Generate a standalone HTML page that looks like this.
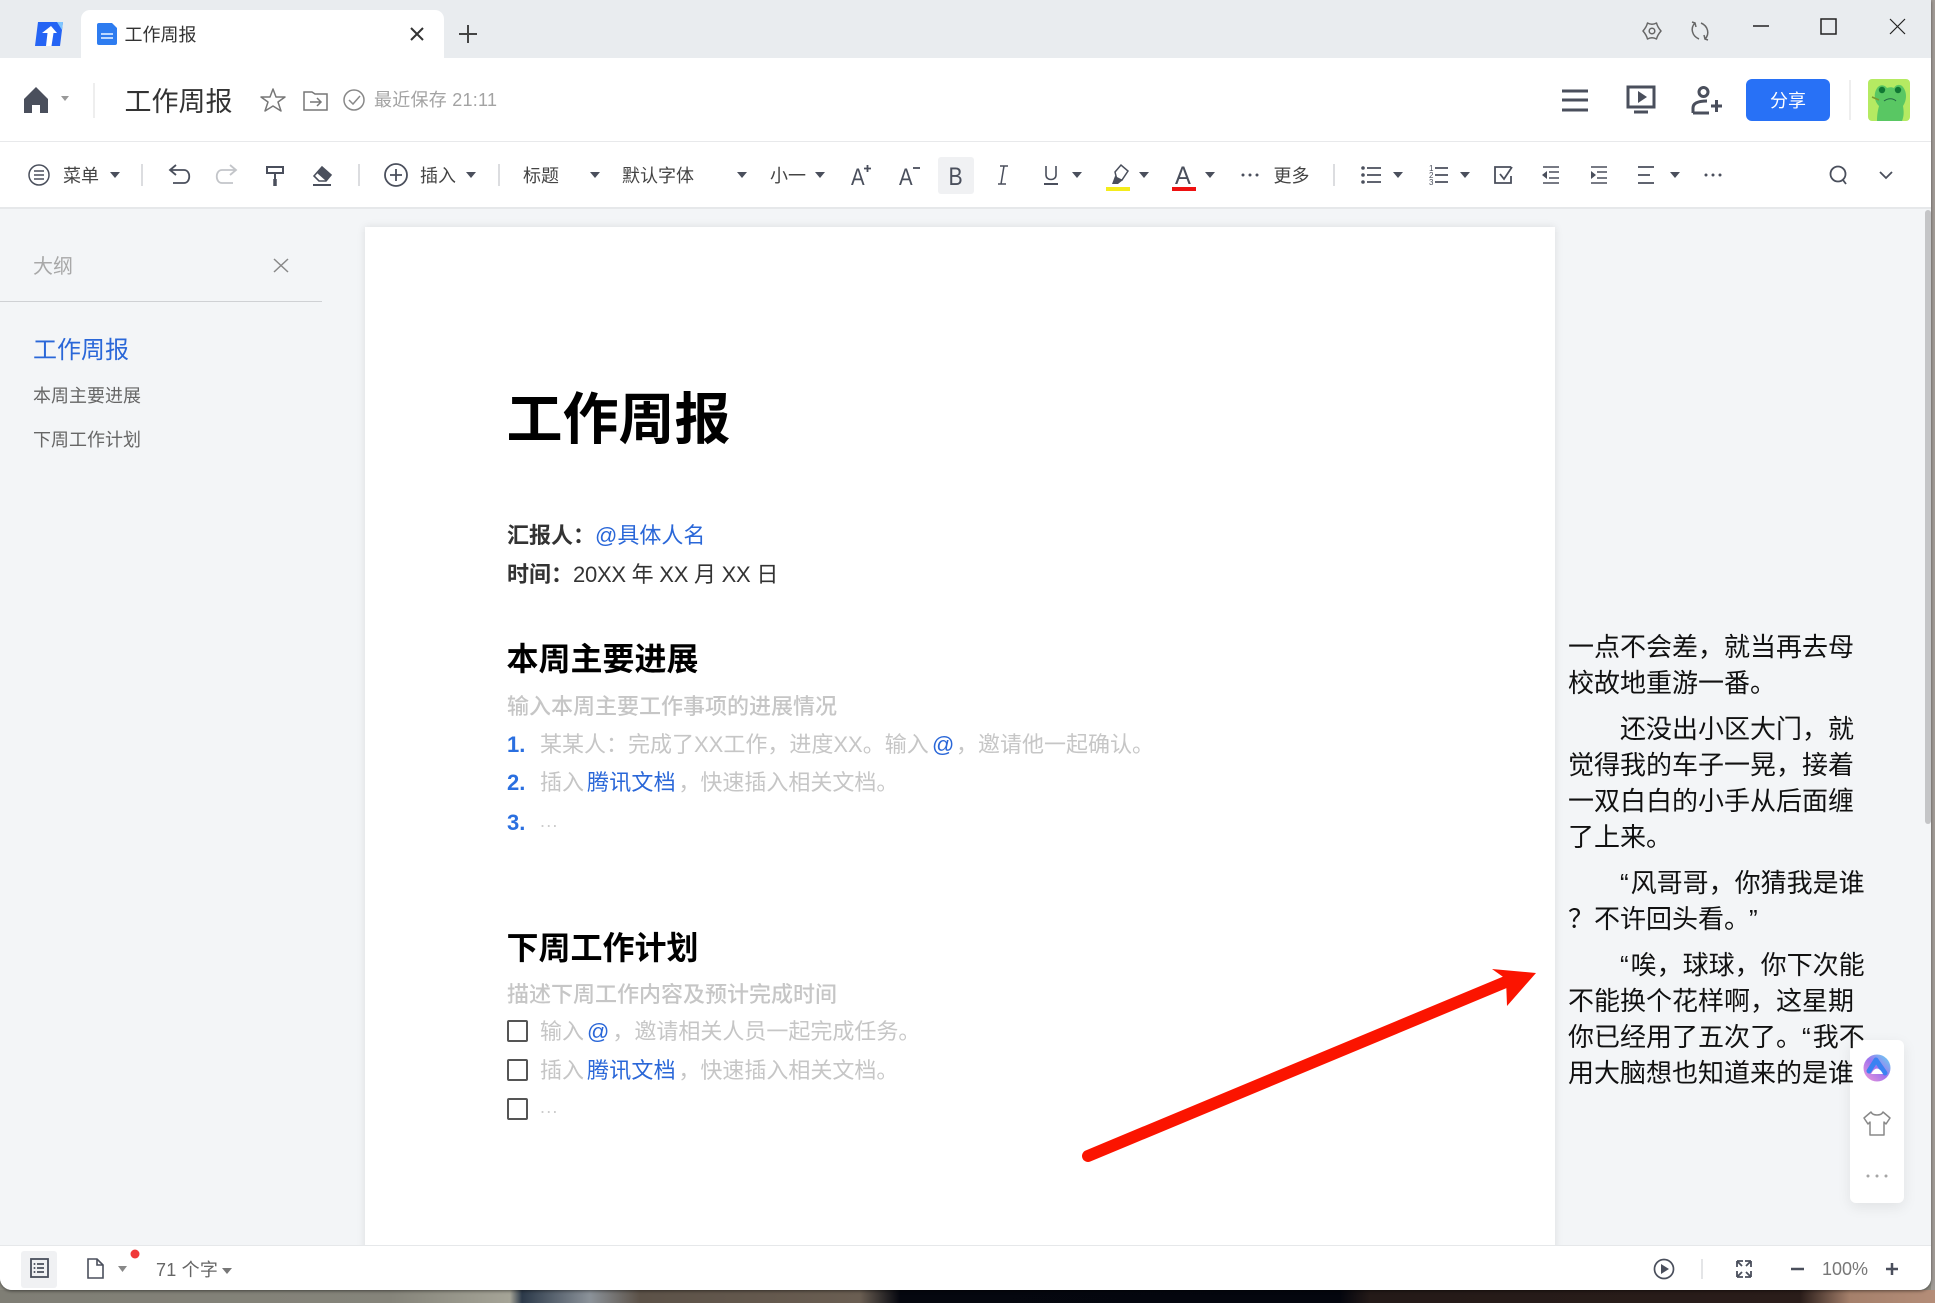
<!DOCTYPE html>
<html lang="zh">
<head>
<meta charset="utf-8">
<title>工作周报</title>
<style>
html,body{margin:0;padding:0;width:1935px;height:1303px;overflow:hidden;background:#8c8b82;}
body{position:relative;font-family:"Liberation Sans","Noto Sans CJK SC",sans-serif;}
.a{position:absolute;}
.t{position:absolute;white-space:nowrap;line-height:1;}
.tb{font-size:18px;color:#444;}
.p{font-size:22px;color:#c6c6c6;}
.b{color:#2a67d8;}
.n{font-size:26px;color:#111;}
.q{margin-right:2px;}
svg.ov{position:absolute;left:0;top:0;}
</style>
</head>
<body>
<!-- desktop photo strip -->
<div class="a" style="left:0;top:1290px;width:1935px;height:13px;background:linear-gradient(90deg,#7f7e75 0,#85847a 390px,#a5a497 510px,#2c3a4a 522px,#8b9299 590px,#5c5248 640px,#6a5e52 860px,#05070f 900px,#04060e 1340px,#241a18 1370px,#2a1d1a 1800px,#a5806b 1850px,#b48d78 1935px);"></div>
<div class="a" style="left:1931px;top:0;width:4px;height:1290px;background:#a19b96;"></div>
<!-- window -->
<div class="a" style="left:0;top:0;width:1931px;height:1290px;background:#f3f5f7;border-radius:0 0 12px 12px;overflow:hidden;box-shadow:0 1px 3px rgba(0,0,0,.5);">
  <div class="a" style="left:0;top:0;width:1931px;height:58px;background:#e9ecef;"></div>
  <div class="a" style="left:81px;top:10px;width:363px;height:48px;background:#fff;border-radius:9px 9px 0 0;"></div>
  <div class="a" style="left:0;top:58px;width:1931px;height:83px;background:#fff;"></div>
  <div class="a" style="left:0;top:141px;width:1931px;height:68px;background:#fff;border-top:1px solid #e8e9eb;border-bottom:2px solid #e6e8ea;box-sizing:border-box;"></div>
  <div class="a" style="left:938px;top:157px;width:36px;height:37px;background:#f0f1f3;border-radius:3px;"></div>
  <div class="a" style="left:1746px;top:79px;width:84px;height:42px;background:#2871f6;border-radius:6px;"></div>
  <div class="a" style="left:0;top:301px;width:322px;height:1px;background:#cfd1d4;"></div>
  <!-- doc page -->
  <div class="a" style="left:365px;top:227px;width:1190px;height:1030px;background:#fff;box-shadow:0 0 8px rgba(0,0,0,.10);"></div>
  <!-- scrollbar -->
  <div class="a" style="left:1925px;top:210px;width:6px;height:614px;background:#c4c5c7;border-radius:3px;"></div>
  <!-- status bar -->
  <div class="a" style="left:0;top:1245px;width:1931px;height:45px;background:#fff;border-top:1px solid #e6e8ea;box-sizing:border-box;"></div>
  <div class="a" style="left:21px;top:1251px;width:36px;height:37px;background:#f0f1f3;border-radius:3px;"></div>
  <!-- float card -->
  <div class="a" style="left:1850px;top:1040px;width:54px;height:163px;background:#fff;border-radius:6px;box-shadow:0 4px 14px rgba(0,0,0,.08);"></div>
</div>

<!-- tab / header text -->
<span class="t" style="left:124.500px;top:26px;font-size:18px;color:#333;">工作周报</span>
<span class="t" style="left:124.500px;top:89px;font-size:27px;color:#333;">工作周报</span>
<span class="t" style="left:374px;top:91px;font-size:18px;color:#a3a3a3;letter-spacing:.25px;">最近保存 21:11</span>
<span class="t" style="left:1770px;top:92px;font-size:18px;color:#fff;">分享</span>

<!-- toolbar text -->
<span class="t tb" style="left:63px;top:167px;">菜单</span>
<span class="t tb" style="left:420px;top:167px;">插入</span>
<span class="t tb" style="left:523px;top:167px;">标题</span>
<span class="t tb" style="left:622px;top:167px;">默认字体</span>
<span class="t tb" style="left:770px;top:167px;">小一</span>
<span class="t tb" style="left:1273.500px;top:167px;">更多</span>

<!-- outline -->
<span class="t" style="left:33px;top:257px;font-size:20px;color:#a8a8a8;">大纲</span>
<span class="t" style="left:33px;top:339px;font-size:24px;color:#2a67d8;">工作周报</span>
<span class="t" style="left:33px;top:387px;font-size:18px;color:#666;">本周主要进展</span>
<span class="t" style="left:33px;top:431px;font-size:18px;color:#666;">下周工作计划</span>

<!-- document -->
<span class="t" style="left:506.500px;top:392px;font-size:56px;font-weight:700;color:#000;">工作周报</span>
<span class="t" style="left:507px;top:525px;font-size:22px;font-weight:700;color:#333;">汇报人：</span>
<span class="t b" style="left:595px;top:525px;font-size:22px;">@具体人名</span>
<span class="t" style="left:507px;top:564px;font-size:22px;font-weight:700;color:#333;">时间：</span>
<span class="t" style="left:573px;top:564px;font-size:22px;color:#333;letter-spacing:-.25px;">20XX 年 XX 月 XX 日</span>

<span class="t" style="left:506.500px;top:643px;font-size:32px;font-weight:700;color:#000;">本周主要进展</span>
<span class="t p" style="left:507px;top:696px;font-weight:500;">输入本周主要工作事项的进展情况</span>
<span class="t" style="left:507px;top:734px;font-size:22px;font-weight:700;color:#2a6fe0;">1.</span>
<span class="t p" style="left:540px;top:734px;">某某人：完成了XX工作，进度XX。输入</span>
<span class="t b" style="left:932px;top:734px;font-size:22px;">@</span>
<span class="t p" style="left:956px;top:734px;">，邀请他一起确认。</span>
<span class="t" style="left:507px;top:772px;font-size:22px;font-weight:700;color:#2a6fe0;">2.</span>
<span class="t p" style="left:540px;top:772px;">插入<span class="b" style="margin:0 2.500px 0 3px;letter-spacing:.2px;">腾讯文档</span>，快速插入相关文档。</span>
<span class="t" style="left:507px;top:812px;font-size:22px;font-weight:700;color:#2a6fe0;">3.</span>
<span class="t" style="left:540px;top:812px;font-size:18px;color:#ccc;letter-spacing:1.200px;">...</span>

<span class="t" style="left:506.500px;top:932px;font-size:32px;font-weight:700;color:#000;">下周工作计划</span>
<span class="t p" style="left:507px;top:984px;font-weight:500;">描述下周工作内容及预计完成时间</span>
<span class="t p" style="left:540px;top:1021px;">输入<span class="b" style="margin:0 3px 0 3px;">@</span>，邀请相关人员一起完成任务。</span>
<span class="t p" style="left:540px;top:1060px;">插入<span class="b" style="margin:0 2.500px 0 3px;letter-spacing:.2px;">腾讯文档</span>，快速插入相关文档。</span>
<span class="t" style="left:540px;top:1098px;font-size:18px;color:#ccc;letter-spacing:1.200px;">...</span>
<div class="a" style="left:507px;top:1020px;width:17px;height:18px;border:2px solid #555;border-radius:2px;"></div>
<div class="a" style="left:507px;top:1059px;width:17px;height:18px;border:2px solid #555;border-radius:2px;"></div>
<div class="a" style="left:507px;top:1098px;width:17px;height:18px;border:2px solid #555;border-radius:2px;"></div>

<!-- right overlay novel text -->
<span class="t n" style="left:1568px;top:634px;">一点不会差，就当再去母</span>
<span class="t n" style="left:1568px;top:670px;">校故地重游一番。</span>
<span class="t n" style="left:1620px;top:716px;">还没出小区大门，就</span>
<span class="t n" style="left:1568px;top:752px;">觉得我的车子一晃，接着</span>
<span class="t n" style="left:1568px;top:788px;">一双白白的小手从后面缠</span>
<span class="t n" style="left:1568px;top:824px;">了上来。</span>
<span class="t n" style="left:1620px;top:870px;"><span class="q">“</span>风哥哥，你猜我是谁</span>
<span class="t n" style="left:1568px;top:906px;">？不许回头看。<span style="margin-left:12px;">”</span></span>
<span class="t n" style="left:1620px;top:952px;"><span class="q">“</span>唉，球球，你下次能</span>
<span class="t n" style="left:1568px;top:988px;">不能换个花样啊，这星期</span>
<span class="t n" style="left:1568px;top:1024px;">你已经用了五次了。<span class="q">“</span>我不</span>
<span class="t n" style="left:1568px;top:1060px;">用大脑想也知道来的是谁</span>

<!-- status text -->
<span class="t" style="left:156px;top:1261px;font-size:18px;color:#666;letter-spacing:.2px;">71 个字</span>
<span class="t" style="left:1822px;top:1260px;font-size:18px;color:#777;">100%</span>

<!-- all icons -->
<svg class="ov" width="1935" height="1303" viewBox="0 0 1935 1303" fill="none" stroke="#4a4f5c" stroke-width="2" style="z-index:4;">
  <defs>
    <linearGradient id="ai" x1="0" y1="1" x2="1" y2="0"><stop offset="0" stop-color="#f29ad6"/><stop offset=".5" stop-color="#a173ee"/><stop offset="1" stop-color="#62dcf4"/></linearGradient>
  </defs>
  <!-- logo -->
  <path d="M38 22H63L60 46H35Z" fill="#2564f4" stroke="none"/>
  <path d="M57 22H63L62 30Z" fill="#7fc6ff" stroke="none"/>
  <path d="M51 26L57 33H53.500L51.500 46H46L47.500 33H42Z" fill="#fff" stroke="none"/>
  <!-- tab doc icon -->
  <path d="M99 23H112L117 28V43a2 2 0 0 1-2 2H99a2 2 0 0 1-2-2V25a2 2 0 0 1 2-2Z" fill="#2e7cf0" stroke="none"/>
  <path d="M101 34H113M101 38H113" stroke="#bcd8ff" stroke-width="2"/>
  <!-- tab close + -->
  <path d="M411 28L423 40M423 28L411 40" stroke="#333"/>
  <path d="M468 25V43M459 34H477" stroke="#444"/>
  <!-- window controls -->
  <g stroke="#666" stroke-width="1.500">
    <path d="M1647.500 23Q1652 25.500 1656.500 23Q1657.500 27 1661 31Q1657.500 35 1656.500 39Q1652 36.500 1647.500 39Q1646.500 35 1643 31Q1646.500 27 1647.500 23Z" stroke-linejoin="round"/>
    <circle cx="1652" cy="31" r="2.800"/>
    <path d="M1695 23C1690 28 1692 36 1699 39M1705 39C1710 34 1708 26 1701 23"/>
    <path d="M1692 22L1695 23L1696 27M1708 40L1705 39L1704 35"/>
  </g>
  <path d="M1753 26H1769" stroke="#222" stroke-width="1.500"/>
  <rect x="1821" y="19" width="15" height="15" stroke="#222" stroke-width="1.500"/>
  <path d="M1890 19L1905 34M1905 19L1890 34" stroke="#222" stroke-width="1.200"/>
  <!-- header -->
  <path d="M36 87L48 99V113H40V105H32V113H24V99Z" fill="#4a4f5c" stroke="none"/>
  <path d="M61 96H69L65 101Z" fill="#999" stroke="none"/>
  <path d="M94 83V118" stroke="#eee"/>
  <path d="M273 89L276 97L285 97L278 102L281 111L273 106L265 111L268 102L261 97L270 97Z" stroke="#777" stroke-width="1.500" stroke-linejoin="round"/>
  <path d="M304 92H312L315 94H327V110H304Z" stroke="#777" stroke-width="1.500"/>
  <path d="M310 102H321M317 98L321 102L317 106" stroke="#777" stroke-width="1.500"/>
  <circle cx="354" cy="100" r="10" stroke="#888" stroke-width="1.500"/>
  <path d="M349 100L353 104L360 96" stroke="#888" stroke-width="1.500"/>
  <path d="M1562 91H1588M1562 100H1588M1562 110H1588" stroke-width="3"/>
  <rect x="1628" y="87" width="26" height="20" stroke-width="3"/>
  <path d="M1638 91L1647 97L1638 103Z" fill="#4a4f5c" stroke="none"/>
  <path d="M1634 112H1648" stroke-width="3"/>
  <circle cx="1703.500" cy="92" r="4.500" stroke-width="3"/>
  <path d="M1693 113V108C1693 103 1698 101 1707 101M1693 113H1709M1711 106H1722M1716.500 100V112" stroke-width="3"/>
  <path d="M1850 80V120" stroke="#eee"/>
  <!-- avatar -->
  <rect x="1868" y="79" width="42" height="42" rx="4" fill="#b5ea62" stroke="none"/>
  <path d="M1877 121C1877 114 1878 110 1879 106C1873 100 1874 91 1878 87C1881 84 1885 85 1887 88C1890 87 1892 87 1894 88C1896 84 1901 84 1903 87C1907 92 1907 100 1903 106C1904 112 1904 116 1902 121Z" fill="#59c763" stroke="none"/>
  <circle cx="1882" cy="90" r="3.200" fill="#173" stroke="none"/><circle cx="1898" cy="90" r="3.200" fill="#173" stroke="none"/>
  <path d="M1884 101C1888 98 1893 98 1896 101" stroke="#264" stroke-width="1"/>
  <path d="M1872 97L1879 100" stroke="#7a9a30" stroke-width="1.500"/>
  <!-- toolbar carets -->
  <g fill="#4a4f5c" stroke="none">
    <path d="M110 172H120L115 178Z"/><path d="M466 172H476L471 178Z"/><path d="M590 172H600L595 178Z"/><path d="M737 172H747L742 178Z"/><path d="M815 172H825L820 178Z"/><path d="M1072 172H1082L1077 178Z"/><path d="M1139 172H1149L1144 178Z"/><path d="M1205 172H1215L1210 178Z"/><path d="M1393 172H1403L1398 178Z"/><path d="M1460 172H1470L1465 178Z"/><path d="M1670 172H1680L1675 178Z"/>
  </g>
  <!-- separators -->
  <g stroke="#dcdde0">
    <path d="M142 164V186M359 164V186M499 164V186M1334 164V186"/>
  </g>
  <!-- menu icon -->
  <circle cx="39" cy="175" r="10" stroke-width="1.500"/>
  <path d="M34 171H44M34 175H44M34 179H44" stroke-width="1.500"/>
  <!-- undo redo -->
  <path d="M171 170H184C191 170 191 183 184 183H173M176 165L170 170L176 175" stroke-width="1.800"/>
  <path d="M235 170H222C215 170 215 183 222 183H233M230 165L236 170L230 175" stroke="#c3c5c9" stroke-width="1.800"/>
  <!-- paint roller -->
  <path d="M267 167H283V173H267ZM275 173V180" stroke-width="2"/>
  <path d="M275 179V186" stroke-width="3.500"/>
  <!-- eraser -->
  <path d="M314 176L322 167L331 175L326 181H319Z" stroke-width="1.600"/>
  <path d="M322 167L331 175L326 181L317 173Z" fill="#4a4f5c" stroke="none"/>
  <path d="M313 185H331" stroke-width="2"/>
  <!-- insert -->
  <circle cx="396" cy="175" r="11" stroke-width="1.800"/>
  <path d="M396 169V181M390 175H402" stroke-width="1.800"/>
  <!-- A+ A- B I U -->
  <g font-family="Liberation Sans" stroke="none" fill="#4a4f5c">
    <text transform="translate(851,185) scale(.85,1)" font-size="24">A</text>
    <text transform="translate(899,185) scale(.85,1)" font-size="24">A</text>
    <text transform="translate(948.500,185) scale(.85,1)" font-size="25">B</text>
    <text transform="translate(1175,184) scale(.95,1)" font-size="25">A</text>
  </g>
  <path d="M864 168.500H871M867.500 165V172" stroke-width="1.800"/>
  <path d="M913 168H920" stroke-width="1.800"/>
  <path d="M1000 166H1008M998 184H1006M1004 166L1001 184" stroke-width="1.500"/>
  <path d="M1046 166V175C1046 181 1056 181 1056 175V166" stroke-width="1.600"/>
  <path d="M1044 184H1058" stroke-width="2"/>
  <!-- highlight -->
  <path d="M1115 172L1121 165L1128 171L1122 180L1117 180Z" stroke-width="1.500"/>
  <path d="M1115 176L1123 180L1118 184H1112Z" fill="#4a4f5c" stroke="none"/>
  <rect x="1106" y="187" width="24" height="4" fill="#f4ec1c" stroke="none"/>
  <rect x="1172" y="187" width="24" height="4" fill="#ee1111" stroke="none"/>
  <!-- dots -->
  <g fill="#4a4f5c" stroke="none">
    <circle cx="1243" cy="175" r="1.500"/><circle cx="1250" cy="175" r="1.500"/><circle cx="1257" cy="175" r="1.500"/>
    <circle cx="1706" cy="175" r="1.500"/><circle cx="1713" cy="175" r="1.500"/><circle cx="1720" cy="175" r="1.500"/>
    <circle cx="1363" cy="168" r="1.800"/><circle cx="1363" cy="175" r="1.800"/><circle cx="1363" cy="182" r="1.800"/>
  </g>
  <path d="M1367 168H1381M1367 175H1381M1367 182H1381" stroke-width="1.800"/>
  <g font-family="Liberation Sans" font-size="8" stroke="none" fill="#4a4f5c">
    <text x="1429" y="171">1</text><text x="1429" y="178">2</text><text x="1429" y="185">3</text>
  </g>
  <path d="M1435 168H1448M1435 175H1448M1435 182H1448" stroke-width="1.800"/>
  <path d="M1511 167H1495V183H1511V176M1500 174L1504 179L1512 167" stroke-width="1.800"/>
  <path d="M1543 167H1559M1549 172H1559M1549 178H1559M1543 183H1559" stroke-width="1.600"/>
  <path d="M1547 171L1542 175L1547 179Z" fill="#4a4f5c" stroke="none"/>
  <path d="M1591 167H1607M1597 172H1607M1597 178H1607M1591 183H1607" stroke-width="1.600"/>
  <path d="M1591 171L1596 175L1591 179Z" fill="#4a4f5c" stroke="none"/>
  <path d="M1638 167H1654M1638 175H1650M1638 183H1654" stroke-width="1.800"/>
  <circle cx="1838" cy="174" r="7.500" stroke-width="1.800"/>
  <path d="M1843 180L1846 184" stroke-width="1.800"/>
  <path d="M1880 172L1886 178L1892 172" stroke-width="1.800"/>
  <!-- outline close -->
  <path d="M274 259L288 272M288 259L274 272" stroke="#888" stroke-width="1.500"/>
  <!-- red arrow -->
  <path d="M1088 1156L1508 981" stroke="#fb1400" stroke-width="12" stroke-linecap="round"/>
  <path d="M1536 973L1492 969L1506 979L1507 1006Z" fill="#fb1400" stroke="none"/>
  <!-- float card icons -->
  <circle cx="1877" cy="1068" r="13.500" fill="url(#ai)" stroke="none"/>
  <path d="M1869 1071L1876 1060L1885 1073" stroke="#3a82f2" stroke-width="5" stroke-linejoin="round" stroke-linecap="round"/>
  <path d="M1871 1074Q1877 1063 1883 1074Z" fill="#fff" stroke="none"/>
  <path d="M1871 1112C1873 1116 1881 1116 1883 1112L1890 1118L1886 1124L1884 1122V1135H1870V1122L1868 1124L1864 1118Z" stroke="#888" stroke-width="1.500" stroke-linejoin="round"/>
  <g fill="#a5a5a5" stroke="none"><circle cx="1868" cy="1176" r="1.500"/><circle cx="1877" cy="1176" r="1.500"/><circle cx="1886" cy="1176" r="1.500"/></g>
  <!-- status icons -->
  <rect x="31" y="1259" width="17" height="18" stroke-width="1.800"/>
  <path d="M37 1264H44M37 1268H44M37 1272H44" stroke-width="1.800"/>
  <g fill="#4a4f5c" stroke="none"><circle cx="34.500" cy="1264" r="1"/><circle cx="34.500" cy="1268" r="1"/><circle cx="34.500" cy="1272" r="1"/></g>
  <path d="M88 1259H97L103 1265V1278H88ZM97 1259V1265H103" stroke-width="1.600"/>
  <path d="M118 1266H127L122.500 1272Z" fill="#888" stroke="none"/>
  <circle cx="135" cy="1254" r="4.500" fill="#f03838" stroke="none"/>
  <path d="M222 1268H232L227 1274Z" fill="#777" stroke="none"/>
  <circle cx="1664" cy="1269" r="9.500" stroke-width="1.700"/>
  <path d="M1661 1264L1669 1269L1661 1274Z" fill="#4a4f5c" stroke="none"/>
  <path d="M1702 1259V1279" stroke="#e4e5e7"/>
  <path d="M1737 1261H1743M1737 1261V1267M1751 1261H1745M1751 1261V1267M1737 1277H1743M1737 1277V1271M1751 1277H1745M1751 1277V1271M1738 1262L1742 1266M1750 1262L1746 1266M1738 1276L1742 1272M1750 1276L1746 1272" stroke-width="1.800"/>
  <path d="M1791 1269H1804" stroke-width="2.500"/>
  <path d="M1886 1269H1898M1892 1263V1275" stroke-width="2.500"/>
</svg>
</body>
</html>
